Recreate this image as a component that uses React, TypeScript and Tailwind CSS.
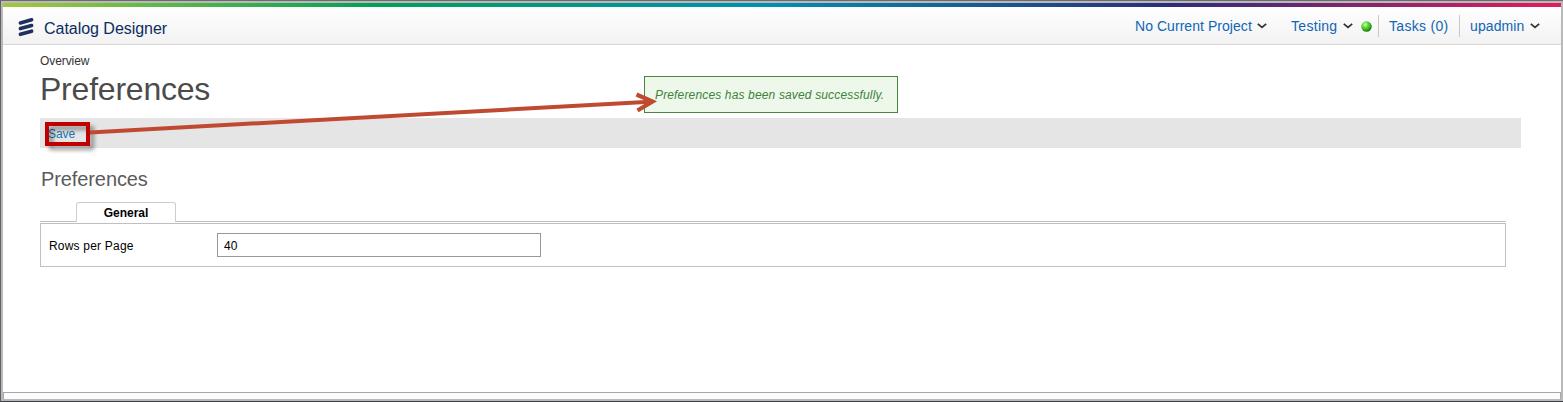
import React from "react";

function Chevron() {
  return (
    <svg width="10" height="6" viewBox="0 0 10 6" className="shrink-0" fill="none" stroke="#333" strokeWidth="1.8">
      <path d="M.8 .9 5 4.4 9.2 .9" />
    </svg>
  );
}

function Logo() {
  return (
    <svg width="16" height="20" viewBox="0 0 16 20" fill="none" stroke="#1f2f5f" strokeWidth="3.6" strokeLinecap="round">
      <path d="M2.4 5.9 13.6 2.8M2.4 11.6 13.6 8.5M2.4 17.3 13.6 14.2" />
    </svg>
  );
}

function StatusDot() {
  return (
    <svg width="11" height="11" viewBox="0 0 11 11">
      <defs>
        <radialGradient id="status" cx=".38" cy=".32" r=".7">
          <stop offset="0" stopColor="#d5ffc0" />
          <stop offset=".35" stopColor="#6be03f" />
          <stop offset=".75" stopColor="#30a817" />
          <stop offset="1" stopColor="#1c6e0b" />
        </radialGradient>
      </defs>
      <circle cx="5.5" cy="5.5" r="5.2" fill="url(#status)" />
    </svg>
  );
}

function Header() {
  return (
    <header className="flex h-[38px] shrink-0 border-b border-[#d6d6d6] bg-linear-to-b from-white to-[#f2f2f2]">
      <div className="ml-[15px] mt-[10px] w-[26px]">
        <Logo />
      </div>
      <div className="mt-3 text-[16px] leading-5 tracking-[-0.03px] text-[#0d2c60]">Catalog Designer</div>
      <nav className="ml-auto mr-[21px] mt-2 flex h-[22px] items-center text-[14px] leading-[22px] text-[#0f66b5]">
        <a className="w-[119px] tracking-[0.05px]">No Current Project</a>
        <span className="ml-[3px] mr-6"><Chevron /></span>
        <a className="w-[49px] tracking-[0.3px]">Testing</a>
        <span className="ml-[3px] mr-[8px]"><Chevron /></span>
        <StatusDot />
        <span className="ml-[6px] h-[22px] w-px bg-[#c8c8c8]" />
        <a className="ml-[10px] w-[61px] tracking-[0.3px]">Tasks (0)</a>
        <span className="ml-[9px] h-[22px] w-px bg-[#c8c8c8]" />
        <a className="ml-[10px] w-[57px] tracking-[0.1px]">upadmin</a>
        <span className="ml-[3px]"><Chevron /></span>
      </nav>
    </header>
  );
}

function Annotation() {
  return (
    <>
      <div className="absolute left-[45px] top-[122px] h-6 w-[45px] border-4 border-[#c00000] drop-shadow-[4px_4px_2px_rgba(0,0,0,0.4)]" />
      <svg className="absolute left-0 top-0" width="700" height="160" viewBox="0 0 700 160" fill="none" stroke="#c04a31" strokeWidth="4">
        <path d="M90 132.5 650 101.7" />
        <path d="M636.5 94.5 652.5 101.5 637.5 110.5" strokeWidth="4.2" />
      </svg>
    </>
  );
}

export default function App() {
  return (
    <div className="relative flex h-[402px] w-[1563px] flex-col overflow-hidden whitespace-nowrap border-b border-l border-t border-b-[#3d4047] border-l-[#665d66] border-t-[#6c6b6d] bg-white font-['Liberation_Sans',Arial,sans-serif] text-black">
      <div className="flex min-h-0 flex-1 flex-col border-2 border-[#b9b9b9]">
        <div className="h-1 shrink-0 bg-[linear-gradient(90deg,#a2c83c_0%,#00a057_24%,#008fb5_49%,#2b2c7c_75%,#e51b5d_100%)]" />
        <Header />
        <main className="flex-1 pl-[37px]">
          <div className="pt-2 text-[12px] leading-4 tracking-[-0.08px] text-[#333]">Overview</div>
          <h1 className="mt-[2px] h-[47px] text-[32px] leading-[37px] tracking-[-0.22px] text-[#4b4b4b]">Preferences</h1>
          <div className="h-[30px] w-[1481px] bg-[#e5e5e5] pl-2 text-[12px] leading-[32px] tracking-[-0.1px] text-[#1477b3]">Save</div>
          <h2 className="ml-px mt-[19px] h-[35px] text-[20px] leading-6 tracking-[-0.1px] text-[#5b5b5b]">Preferences</h2>
          <div className="flex h-5 w-[1466px]">
            <div className="w-9 border-b border-[#c0c0c0]" />
            <div className="w-[100px] rounded-t-[3px] border border-b-0 border-[#cdcdcd] text-center text-[12px] font-bold leading-5">General</div>
            <div className="flex-1 border-b border-[#c0c0c0]" />
          </div>
          <div className="mt-px flex h-11 w-[1466px] items-center border border-[#c0c0c0] pl-2 text-[12px]">
            <label htmlFor="rows" className="w-[168px] pt-px tracking-[0.2px]">Rows per Page</label>
            <input id="rows" defaultValue="40" className="h-6 w-[324px] border border-[#999] bg-white pl-1.5 pt-px text-[12px] outline-none" />
          </div>
        </main>
        <footer className="h-[7px] shrink-0 border-l border-r border-t border-[#a4a9b3] bg-[#fcfcfc]" />
      </div>
      <div className="absolute left-[643px] top-[75px] h-[37px] w-[254px] border border-[#4b8440] bg-[#edf8ea] pl-[10px] text-[12px] italic leading-[36px] tracking-[0.15px] text-[#40823c]">Preferences has been saved successfully.</div>
      <div className="absolute -left-px -top-px">
        <Annotation />
      </div>
    </div>
  );
}
